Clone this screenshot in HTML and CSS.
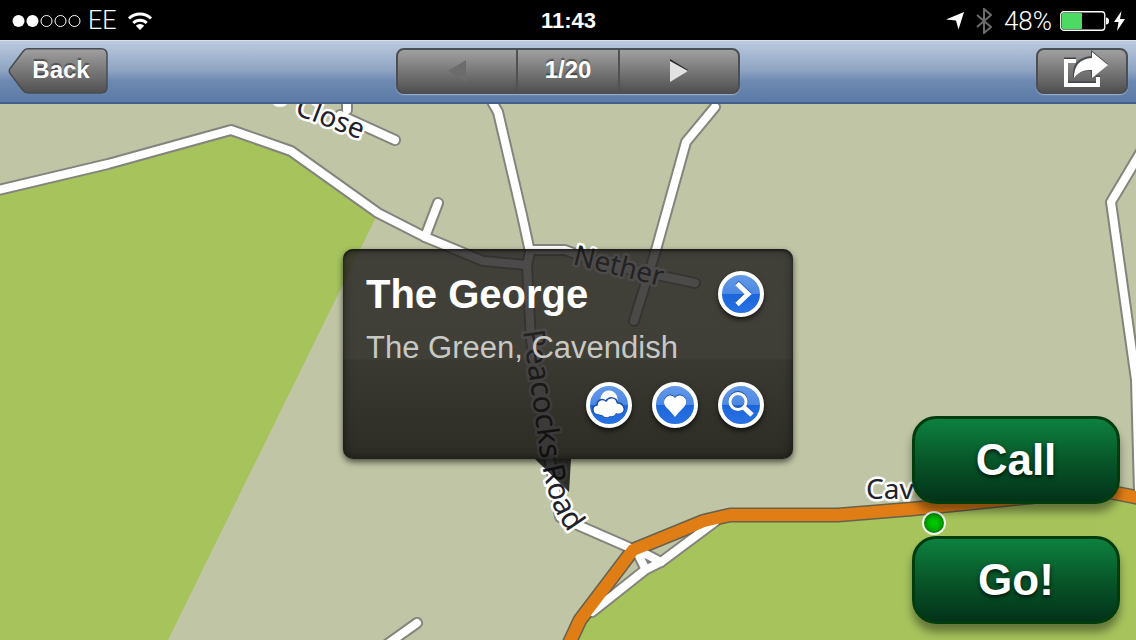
FILE: index.html
```html
<!DOCTYPE html>
<html lang="en">
<head>
<meta charset="utf-8">
<meta name="viewport" content="width=device-width, initial-scale=1">
<title>The George</title>
<link rel="stylesheet" href="styles.css">
</head>
<body>
<div class="screen">
  <header class="status">
    <div class="status-left">
      <svg class="signal" width="69" height="14" viewBox="0 0 69 14" aria-hidden="true">
        <g fill="#fff"><circle cx="6.500" cy="7" r="6"/><circle cx="20.500" cy="7" r="6"/></g>
        <g fill="none" stroke="#fff"><circle cx="34.500" cy="7" r="5.500"/><circle cx="48.500" cy="7" r="5.500"/><circle cx="62.500" cy="7" r="5.500"/></g>
      </svg>
      <span class="carrier">EE</span>
      <svg class="wifi" width="26" height="18" viewBox="0 0 26 18" aria-hidden="true">
        <g fill="none" stroke="#fff" stroke-width="3"><path d="M2 6.500a15.500 15.500 0 0 1 22 0"/><path d="M6.300 11a9.500 9.500 0 0 1 13.400 0"/></g>
        <path d="M13 18l-4.200-4.200a6 6 0 0 1 8.400 0z" fill="#fff"/>
      </svg>
    </div>
    <time class="clock">11:43</time>
    <div class="status-right">
      <svg width="18" height="18" viewBox="0 0 18 18" aria-hidden="true"><path d="M18 0L12.500 17.500L10 8.500L0 7.500z" fill="#fff"/></svg>
      <svg width="16" height="26" viewBox="0 0 16 26" aria-hidden="true"><path d="M1 7l14 12-7 6V1l7 6L1 19" fill="none" stroke="#6c6c6c" stroke-width="2"/></svg>
      <span class="percent">48%</span>
      <span class="power">
        <svg width="49" height="20" viewBox="0 0 49 20" aria-hidden="true"><rect x=".750" y=".750" width="44" height="18.500" rx="3" fill="none" stroke="#fff" stroke-width="1.300"/><rect x="2" y="2" width="20" height="16" rx="1" fill="#4cd964"/><path d="M46 6.500q3 0 3 3.500t-3 3.500z" fill="#fff"/></svg>
        <svg width="11" height="20" viewBox="0 0 11 20" aria-hidden="true"><path d="M7.500 0L0 11h4.500L3 20l8-12H6z" fill="#fff"/></svg>
      </span>
    </div>
  </header>

  <nav class="toolbar">
    <div class="toolbar-start">
      <button class="back" type="button">
        <svg class="back-shape" viewBox="0 0 100 46" aria-hidden="true">
          <defs><linearGradient id="metal" x2="0" y2="1"><stop stop-color="#a0a0a0"/><stop offset="1" stop-color="#505050"/></linearGradient></defs>
          <path d="M20 .800H93q6 0 6 6V39q0 6-6 6H20q-3 0-5-2.500L2.500 26q-2.500-3 0-6L15 3.500Q17 .800 20 .800z" fill="url(#metal)" stroke="#484c52" stroke-width="1.500"/>
        </svg>
        <span class="back-label">Back</span>
      </button>
    </div>
    <div class="pager">
      <button class="pager-item pager-step" type="button" aria-label="Previous" disabled>
        <svg width="18" height="22" viewBox="0 0 18 22"><path d="M18 0v22L0 11z" fill="#6c6c6c"/></svg>
      </button>
      <span class="pager-item pager-count">1/20</span>
      <button class="pager-item pager-step" type="button" aria-label="Next">
        <svg width="18" height="24" viewBox="0 0 18 24"><path d="M0 0l18 11-1 2L0 4z" fill="#252525"/><path d="M0 2l18 10L0 23z" fill="#e2e2e2"/></svg>
      </button>
    </div>
    <div class="toolbar-end">
      <button class="share" type="button" aria-label="Share">
        <svg width="46" height="38" viewBox="0 0 46 38">
          <path d="M14 9.500H4v24h32v-8" fill="none" stroke="#41454b" stroke-width="4"/>
          <path d="M14 11H4v24h32v-8" fill="none" stroke="#fff" stroke-width="4"/>
          <path d="M29 0l17 14-17 14v-7q-13-1-18 7Q9 8 29 6z" fill="#484c51"/>
          <path d="M30 2l16 13-16 13v-8q-12-1-18 8Q12 9 30 8z" fill="#fff"/>
        </svg>
      </button>
    </div>
  </nav>

  <main class="map">
    <svg class="map-canvas" viewBox="0 104 1136 536" preserveAspectRatio="xMidYMid slice" role="img" aria-label="Map of Cavendish">
      <defs>
        <path id="peacocks" d="M523 331L539 446Q544 482 553 506Q560 523 580 546"/>
        <radialGradient id="dot"><stop stop-color="#00cf00"/><stop offset=".500" stop-color="#00b400"/><stop offset="1" stop-color="#007800"/></radialGradient>
        <g id="lanes">
          <path d="M-10 192L108 164L231 130L291 151L378 213L425 237L483 261L527 265"/>
          <path d="M425 237L438 203"/>
          <path d="M490 98L498 112L522 215L530 252L527 265L531 340L546 440L560 517L580 526L635 550"/>
          <path d="M530 250H565L600 263L695 283"/>
          <path d="M715 107L686 142L656 250L634 321"/>
          <path d="M347 95V110M340 115L395 140"/>
          <path d="M1142 150L1111 202L1136 380L1139 492"/>
          <path d="M417 623L375 653"/>
          <path d="M592 612L645 570L661 562L716 521"/>
          <path d="M636 550L645 568M638 550L661 562"/>
        </g>
        <path id="main-road" d="M566 650L580 620L633 550L704 521L730 515H838L912 509L1100 490L1145 499"/>
      </defs>
      <rect y="104" width="1136" height="536" fill="#c0c5a5"/>
      <path d="M0 190L108 164L231 130L291 151L378 213L168 640H0z" fill="#a6c35c"/>
      <path d="M570 640L588 616L645 570L661 562L720 519L730 515H838L912 509L1100 490L1136 497V640z" fill="#a6c35c"/>
      <g fill="none" stroke-linejoin="round">
        <use href="#lanes" stroke="#83847c" stroke-width="12" stroke-linecap="round"/>
        <use href="#main-road" stroke="#66624e" stroke-width="15"/>
        <use href="#lanes" stroke="#fff" stroke-width="8" stroke-linecap="round"/>
        <use href="#main-road" stroke="#e07e15" stroke-width="12"/>
      </g>
      <ellipse cx="280" cy="103" rx="7" ry="4" fill="#fff"/>
      <g class="map-text">
        <text transform="translate(294 114) rotate(21)">Close</text>
        <text transform="translate(572 264) rotate(14)">Nether</text>
        <text class="map-text-large"><textPath href="#peacocks">Peacocks Road</textPath></text>
        <text x="866" y="499">Cav</text>
      </g>
      <circle cx="934" cy="523" r="11" fill="url(#dot)" stroke="#f4f4ee" stroke-width="2"/>
    </svg>

    <section class="callout">
      <svg class="callout-tip" width="36" height="33" viewBox="0 0 36 33" aria-hidden="true"><path d="M0 0H36L34 33z" fill="#0b0a0a" fill-opacity=".820"/></svg>
      <div class="callout-head">
        <h1 class="place">The George</h1>
        <button class="round" type="button" aria-label="Details">
          <svg width="38" height="38" viewBox="0 0 38 38"><path d="M15 7.500L26 18L15 28.500" fill="none" stroke="#1753b8" stroke-width="5"/><path d="M15 8.500L26 19L15 29.500" fill="none" stroke="#fff" stroke-width="5"/></svg>
        </button>
      </div>
      <p class="address">The Green, Cavendish</p>
      <div class="callout-actions">
        <button class="round" type="button" aria-label="Weather">
          <svg width="38" height="38" viewBox="0 0 38 38"><circle cx="19" cy="13" r="8.500" fill="#fff"/><path d="M8 28C2 28 1 20 7 19C7 14 12 12 16 15C19 10 27 11 27 17C33 16 37 25 31 27Q28 28 26 27Q24 31 20 30Q16 33 12 29Q10 29 8 28z" fill="#fff" stroke="#1c50a4" stroke-width="1.500"/><path d="M8 28C2 28 3 20 8 20C8 15 13 14 17 17C19 12 26 13 27 18C33 18 36 25 31 27Q28 28 26 27Q24 31 20 30Q16 33 12 29Q10 29 8 28z" fill="#fff"/></svg>
        </button>
        <button class="round" type="button" aria-label="Favourite">
          <svg width="38" height="38" viewBox="0 0 38 38"><path d="M19 30Q16 26 11 22C3 14 14 5 19 12C24 5 36 14 27 22Q22 26 19 30z" fill="#1c50a4" transform="translate(0 -1)"/><path d="M19 31Q16 27 11 22C3 14 14 5 19 12C24 5 36 14 27 22Q22 27 19 31z" fill="#fff"/></svg>
        </button>
        <button class="round" type="button" aria-label="Search nearby">
          <svg width="38" height="38" viewBox="0 0 38 38"><g fill="none" stroke="#1c50a4" transform="translate(0 -1)"><circle cx="16" cy="15.500" r="8" stroke-width="3"/><path d="M21 21L30 29" stroke-width="4"/></g><g fill="none" stroke="#fff"><circle cx="16" cy="15.500" r="8" stroke-width="3"/><path d="M21.500 21L30 29" stroke-width="5"/></g></svg>
        </button>
      </div>
    </section>

    <div class="actions">
      <button class="action" type="button">Call</button>
      <button class="action" type="button">Go!</button>
    </div>
  </main>
</div>
</body>
</html>
```
FILE: styles.css
```css
* { box-sizing: border-box; }

body {
  margin: 0;
  font-family: "Liberation Sans", Arial, sans-serif;
  color: #fff;
}

button {
  margin: 0;
  padding: 0;
  border: 0;
  background: none;
  color: inherit;
  font: inherit;
  cursor: pointer;
}

svg { display: block; }

.screen {
  display: flex;
  flex-direction: column;
  min-height: 100vh;
}

/* Status bar */
.status {
  display: grid;
  grid-template-columns: 1fr auto 1fr;
  align-items: center;
  height: 40px;
  padding: 1px 11px 0 12px;
  background: #000;
}

.status-left,
.status-right {
  display: flex;
  align-items: center;
}

.carrier {
  margin: 0 11px 0 7px;
  font: 300 25px/38px Roboto, "Liberation Sans", sans-serif;
}

.clock {
  font-size: 22px;
  font-weight: 700;
  line-height: 38px;
}

.status-right {
  justify-content: flex-end;
  gap: 12px;
}

.percent {
  font: 300 26px/38px Roboto, "Liberation Sans", sans-serif;
}

.power {
  display: flex;
  gap: 5px;
  margin-left: -4px;
}

/* Toolbar */
.toolbar {
  display: grid;
  grid-template-columns: 1fr auto 1fr;
  align-items: center;
  height: 64px;
  padding: 0 8px 2px;
  border-top: 1px solid #d5dfeb;
  border-bottom: 2px solid #44618d;
  background: linear-gradient(#bccade, #8ea4c2 48%, #6d89b1 66%, #5c7aa5);
}

.toolbar-end {
  display: flex;
  justify-content: flex-end;
}

.back {
  position: relative;
  display: block;
  width: 100px;
  height: 46px;
  padding: 0 0 2px 6px;
}

.back-shape {
  position: absolute;
  inset: 0;
}

.back-label {
  position: relative;
}

.back-label,
.pager-count {
  font-size: 24px;
  font-weight: 700;
  text-shadow: 0 -2px 1px rgba(0, 0, 0, .4);
}

.pager,
.share {
  height: 46px;
  border: 2px solid #4b4e53;
  border-radius: 8px;
  background: linear-gradient(#a0a0a0, #505050);
  box-shadow: 0 1px 1px rgba(255, 255, 255, .4);
}

.pager { display: flex; }

.pager-item {
  display: flex;
  align-items: center;
  justify-content: center;
}

.pager-step {
  width: 118px;
}

.pager-count {
  width: 104px;
  padding-bottom: 2px;
  border: solid #515151;
  border-width: 0 2px;
}

.share {
  display: flex;
  align-items: flex-start;
  justify-content: center;
  width: 92px;
  padding-left: 6px;
}

/* Map */
.map {
  position: relative;
  flex: 1;
  min-height: 536px;
  overflow: hidden;
  background: #c0c5a5;
}

.map-canvas {
  position: absolute;
  width: 100%;
  height: 100%;
}

.map-text {
  fill: #20212a;
  stroke: #fff;
  stroke-width: 5px;
  stroke-linejoin: round;
  paint-order: stroke;
  font: 28px "Noto Sans", "Open Sans", sans-serif;
}

.map-text-large {
  font-size: 30px;
}

/* Callout above the selected place */
.callout {
  position: absolute;
  top: 145px;
  left: 50%;
  width: 450px;
  margin-left: -225px;
  padding: 22px 29px 31px 23px;
  border-radius: 10px;
  background: linear-gradient(rgba(37, 35, 34, .82), rgba(35, 33, 31, .82) 52%, rgba(28, 26, 24, .82) 53%, rgba(12, 10, 8, .82));
  box-shadow: inset 0 0 10px rgba(0, 0, 0, .5), inset 0 2px 2px rgba(0, 0, 0, .4), 0 3px 6px rgba(0, 0, 0, .6);
}

.callout-tip {
  position: absolute;
  top: 100%;
  left: 192px;
}

.callout-head {
  display: flex;
  align-items: center;
  justify-content: space-between;
}

.place {
  margin: 0;
  font-size: 40px;
  line-height: 46px;
}

.address {
  margin: 13px 0 16px;
  color: #c8c8c4;
  font-size: 31px;
  line-height: 36px;
}

.callout-actions {
  display: flex;
  justify-content: flex-end;
  gap: 20px;
}

.round {
  width: 46px;
  height: 46px;
  border: 4px solid #fff;
  border-radius: 50%;
  background: linear-gradient(#6399e8, #4c88e2 50%, #1b66db 51%, #2a72e4);
  box-shadow: 0 3px 5px rgba(0, 0, 0, .6);
}

/* Call and navigate buttons */
.actions {
  position: absolute;
  right: 16px;
  bottom: 16px;
  display: flex;
  flex-direction: column;
  gap: 32px;
}

.action {
  width: 208px;
  height: 88px;
  border: 3px solid #003c0d;
  border-radius: 24px;
  background: linear-gradient(#0d813f, #075327 55%, #02331a);
  box-shadow: 0 8px 8px rgba(0, 0, 0, .4);
  font-size: 44px;
  font-weight: 700;
  text-shadow: 0 2px 4px rgba(0, 0, 0, .8);
}
```
